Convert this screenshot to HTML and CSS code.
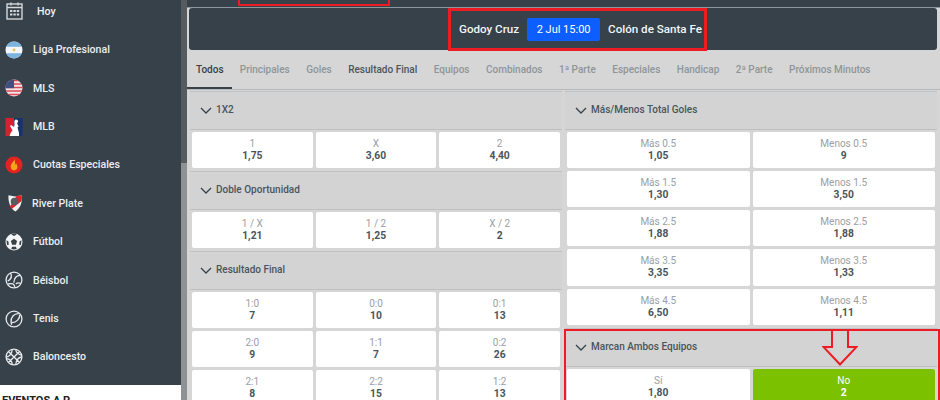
FILE: index.html
```html
<!DOCTYPE html>
<html lang="es">
<head>
<meta charset="utf-8">
<title>Godoy Cruz - Colón de Santa Fe</title>
<link rel="stylesheet" href="styles.css">
</head>
<body>
<div class="page">
  <aside class="side">
    <nav class="nav">
      <div class="nav-item nav-hoy"><svg class="ico" viewBox="0 0 18 18"><rect x="1" y="2" width="15" height="15" fill="none" stroke="#d5d8da" stroke-width="1.4"/><path d="M1 5.5h15M5 0.5v3M12 0.5v3" stroke="#d5d8da" stroke-width="1.4"/><path d="M4 8h2.4v2H4zM7.4 8h2.4v2H7.4zM10.8 8h2.4v2h-2.4zM4 11.5h2.4v2H4zM7.4 11.5h2.4v2H7.4zM10.8 11.5h2.4v2h-2.4z" fill="#d5d8da"/></svg><span>Hoy</span></div>
      <div class="nav-item"><svg class="ico" viewBox="0 0 18 18"><defs><clipPath id="c1"><circle cx="9" cy="9" r="8.5"/></clipPath></defs><g clip-path="url(#c1)"><rect width="18" height="18" fill="#f4f6f7"/><rect width="18" height="5.8" fill="#7db4de"/><rect y="12.2" width="18" height="5.8" fill="#7db4de"/></g><circle cx="9" cy="9" r="1.4" fill="#e8c45a"/></svg><span>Liga Profesional</span></div>
      <div class="nav-item"><svg class="ico" viewBox="0 0 18 18"><defs><clipPath id="c2"><circle cx="9" cy="9" r="8.5"/></clipPath></defs><g clip-path="url(#c2)"><rect width="18" height="18" fill="#f3e4e6"/><path d="M0 1.5h18M0 5h18M0 8.5h18M0 12h18M0 15.5h18" stroke="#d9495a" stroke-width="1.7"/><rect width="9" height="9.2" fill="#3d4f86"/></g></svg><span>MLS</span></div>
      <div class="nav-item"><svg class="ico" viewBox="0 0 18 18"><rect x="0.5" y="0" width="8.5" height="18" fill="#d4232f"/><rect x="9" y="0" width="8.5" height="18" fill="#17336e"/><path d="M11 1.5c1.6 0 2.4 1.2 2 2.7l-1 .8 1.6 3.5-1.1 1 1.500 5.500v3.500H4.500c.6-2.600 1.600-4.700 3-6.300L5 8l1-1 3 2 .6-3C9 4 9.400 1.500 11 1.500z" fill="#fff"/></svg><span>MLB</span></div>
      <div class="nav-item"><svg class="ico" viewBox="0 0 18 18"><circle cx="9" cy="9" r="8.500" fill="#e3231f"/><path d="M9.300 3c.4 2-3.600 4.200-3.600 7.600C5.700 13 7 14.400 9 14.400s3.400-1.400 3.400-3.600c0-1.600-.8-2.800-1.400-3.600-.2.900-.5 1.300-1 1.600.3-2.100-.1-4.300-.7-5.800z" fill="#f7a11f"/></svg><span>Cuotas Especiales</span></div>
      <div class="nav-item nav-river"><svg class="ico" viewBox="0 0 18 18"><path d="M2.500 1.200 9 2.400l6.800-1.200c.6 6.300-.9 12.700-6.300 16.300C4.100 14.300 2 7.400 2.500 1.200z" fill="#f2f2f2"/><path d="M10.500 1.900 15.800 1.200c.2 2 .1 4-.2 5.900L5.400 15.200 4 12.500z" fill="#d9252b"/><circle cx="8.500" cy="7.500" r="3.800" fill="#555c62"/></svg><span>River Plate</span></div>
      <div class="nav-item"><svg class="ico" viewBox="0 0 18 18"><circle cx="9" cy="9" r="8.500" fill="#f2f4f5"/><path d="M9 5.700l3.100 2.300-1.200 3.700H7.100L5.900 8z" fill="#36414a"/><path d="M6.500 1.400 9 2.900l2.500-1.500-.3-.6H6.800zM1.500 7.200l1.900 1.400.4 3.100-1.700.3zM16.500 7.200l-1.900 1.400-.4 3.100 1.700.3zM6.200 16l.9-2.200h3.800l.9 2.200-2.800.6z" fill="#36414a"/></svg><span>Fútbol</span></div>
      <div class="nav-item"><svg class="ico" viewBox="0 0 18 18"><g fill="none" stroke="#e9ecee" stroke-width="1.300"><circle cx="9" cy="9" r="7.900"/><path d="M5.500 2c1.800 2.900 1.600 5.200-2.800 8.300M3 13c4-1 6.500-.4 6.800 3.300M15.200 4.300c-3.500 0-6 2.500-6.400 7.500M15.800 12.500c-1.700-.9-3.400-.8-5 .5"/></g></svg><span>Béisbol</span></div>
      <div class="nav-item"><svg class="ico" viewBox="0 0 18 18"><g fill="none" stroke="#e9ecee" stroke-width="1.300"><circle cx="9" cy="9" r="7.900"/><path d="M13.800 3.700c-4.800-.4-8.300 3.600-7.700 8.700.1.900.4 1.700.8 2.300M14.700 4.700c.2 4.100-3 7.800-7.800 8"/></g></svg><span>Tenis</span></div>
      <div class="nav-item"><svg class="ico" viewBox="0 0 18 18"><g fill="none" stroke="#e9ecee" stroke-width="1.300"><circle cx="9" cy="9" r="7.900"/><path d="M3.400 3.500 14.600 14.500M14.600 3.500 3.400 14.500M1.300 9c3.500-.5 5.500-3 6-7.700M16.700 9c-3.500.5-5.500 3-6 7.700M10.700 1.300c.3 2.800 2 5 6 6M1.300 10.700c4 .3 5.700 2.200 6 6"/></g></svg><span>Baloncesto</span></div>
    </nav>
    <div class="side-foot">EVENTOS A P</div>
  </aside>
  <div class="scroll"><div class="scroll-thumb"></div></div>
  <main class="main">
    <div class="topstrip"></div>
    <header class="match">
      <span class="team">Godoy Cruz</span>
      <span class="date">2 Jul 15:00</span>
      <span class="team">Colón de Santa Fe</span>
    </header>
    <div class="tabs">
      <span class="tab active">Todos</span>
      <span class="tab">Principales</span>
      <span class="tab">Goles</span>
      <span class="tab strong">Resultado Final</span>
      <span class="tab">Equipos</span>
      <span class="tab">Combinados</span>
      <span class="tab">1ª Parte</span>
      <span class="tab">Especiales</span>
      <span class="tab">Handicap</span>
      <span class="tab">2ª Parte</span>
      <span class="tab">Próximos Minutos</span>
    </div>
    <div class="cols">
      <section class="col">
        <div class="mkt-head"><svg class="chev" viewBox="0 0 12 7"><path d="M1 1l5 5 5-5" fill="none" stroke="#36414a" stroke-width="1.300"/></svg>1X2</div>
        <div class="odds three">
          <div class="odd"><small>1</small><b>1,75</b></div>
          <div class="odd"><small>X</small><b>3,60</b></div>
          <div class="odd"><small>2</small><b>4,40</b></div>
        </div>
        <div class="mkt-head"><svg class="chev" viewBox="0 0 12 7"><path d="M1 1l5 5 5-5" fill="none" stroke="#36414a" stroke-width="1.300"/></svg>Doble Oportunidad</div>
        <div class="odds three">
          <div class="odd"><small>1 / X</small><b>1,21</b></div>
          <div class="odd"><small>1 / 2</small><b>1,25</b></div>
          <div class="odd"><small>X / 2</small><b>2</b></div>
        </div>
        <div class="mkt-head"><svg class="chev" viewBox="0 0 12 7"><path d="M1 1l5 5 5-5" fill="none" stroke="#36414a" stroke-width="1.300"/></svg>Resultado Final</div>
        <div class="odds three">
          <div class="odd"><small>1:0</small><b>7</b></div>
          <div class="odd"><small>0:0</small><b>10</b></div>
          <div class="odd"><small>0:1</small><b>13</b></div>
          <div class="odd"><small>2:0</small><b>9</b></div>
          <div class="odd"><small>1:1</small><b>7</b></div>
          <div class="odd"><small>0:2</small><b>26</b></div>
          <div class="odd"><small>2:1</small><b>8</b></div>
          <div class="odd"><small>2:2</small><b>15</b></div>
          <div class="odd"><small>1:2</small><b>13</b></div>
        </div>
      </section>
      <section class="col">
        <div class="mkt-head"><svg class="chev" viewBox="0 0 12 7"><path d="M1 1l5 5 5-5" fill="none" stroke="#36414a" stroke-width="1.300"/></svg>Más/Menos Total Goles</div>
        <div class="odds two">
          <div class="odd"><small>Más 0.5</small><b>1,05</b></div>
          <div class="odd"><small>Menos 0.5</small><b>9</b></div>
          <div class="odd"><small>Más 1.5</small><b>1,30</b></div>
          <div class="odd"><small>Menos 1.5</small><b>3,50</b></div>
          <div class="odd"><small>Más 2.5</small><b>1,88</b></div>
          <div class="odd"><small>Menos 2.5</small><b>1,88</b></div>
          <div class="odd"><small>Más 3.5</small><b>3,35</b></div>
          <div class="odd"><small>Menos 3.5</small><b>1,33</b></div>
          <div class="odd"><small>Más 4.5</small><b>6,50</b></div>
          <div class="odd"><small>Menos 4.5</small><b>1,11</b></div>
        </div>
        <div class="mkt-head"><svg class="chev" viewBox="0 0 12 7"><path d="M1 1l5 5 5-5" fill="none" stroke="#36414a" stroke-width="1.300"/></svg>Marcan Ambos Equipos</div>
        <div class="odds two">
          <div class="odd"><small>Sí</small><b>1,80</b></div>
          <div class="odd picked"><small>No</small><b>2</b></div>
        </div>
      </section>
    </div>
  </main>
</div>
<div class="mark mark-top"></div>
<div class="mark mark-match"></div>
<div class="mark mark-market"></div>
<svg class="arrow" viewBox="0 0 36 36"><path d="M10 0v17H1.500L18 34.500 34.500 17H26V0" fill="none" stroke="#ed1c24" stroke-width="2"/></svg>
</body>
</html>
```
FILE: styles.css
```css
* { box-sizing: border-box; }
html, body { margin: 0; height: 400px; overflow: hidden; }
body { position: relative; font-family: Roboto, "Liberation Sans", sans-serif; background: #d6d6d6; color: #36414a; }
.page { display: flex; height: 400px; }

.side { width: 181px; flex: none; display: flex; flex-direction: column; background: #fff; }
.nav { height: 385px; flex: none; background: #36414a; overflow: hidden; }
.nav-item { height: 38.4px; display: flex; align-items: center; padding-left: 5px; gap: 10px; color: #eceeef; font-size: 10.6px; font-weight: 500; }
.nav-item:first-child { margin-top: -7.8px; }
.nav-hoy { padding-left: 6px; gap: 13px; }
.nav-river { padding-left: 6px; gap: 8px; }
.ico { width: 18px; height: 18px; flex: none; }
.side-foot { padding: 9px 0 0 2px; font-size: 11px; font-weight: 700; color: #222; line-height: 13px; white-space: nowrap; }

.scroll { width: 6px; flex: none; background: #8e9295; }
.scroll-thumb { height: 163px; background: #565b60; }

.main { flex: 1; min-width: 0; display: flex; flex-direction: column; }
.topstrip { height: 8px; flex: none; background: #36414a; border-bottom: 1px solid #8f979d; }
.match { height: 42px; flex: none; margin: 0 3px 0 2px; padding-left: 35px; border-radius: 3px; background: #36414a; display: flex; align-items: center; justify-content: center; gap: 8px; }
.team { color: #f4f5f6; font-size: 11.6px; font-weight: 500; }
.date { width: 73px; height: 23px; border-radius: 2px; background: #0d5eff; color: #fff; font-size: 11px; display: flex; align-items: center; justify-content: center; white-space: nowrap; }

.tabs { height: 40px; flex: none; display: flex; border-bottom: 1px solid #b5b9bb; }
.tab { padding: 0 8.25px; display: flex; align-items: center; font-size: 10px; font-weight: 500; color: #8f9599; white-space: nowrap; }
.tab.strong { color: #4c555c; }
.tab.active { color: #36414a; border-bottom: 2px solid #36414a; padding-left: 9px; padding-right: 8px; padding-top: 2px; }

.cols { display: flex; gap: 3px; padding: 1px 3px 0; }
.col { flex: 1; min-width: 0; }
.mkt-head { height: 38.8px; display: flex; align-items: center; gap: 4px; padding: 0 0 2px 10px; background: #d3d3d3; border-top: 1px solid #bfc1c2; border-bottom: 1px solid #bdbfc0; font-size: 10px; font-weight: 500; color: #4a545c; }
.chev { width: 12px; height: 7px; flex: none; margin-top: 2px; }
.odds { display: grid; gap: 3px; padding: 2px 2px; }
.odds + .mkt-head { margin-top: 1px; }
.three { grid-template-columns: repeat(3, 1fr); }
.two { grid-template-columns: repeat(2, 1fr); }
.odd { height: 36.2px; background: #fff; border-radius: 2px; display: flex; flex-direction: column; align-items: center; justify-content: center; }
.odd small { font-size: 10px; line-height: 12px; color: #9aa0a4; }
.odd b { font-size: 10.3px; line-height: 12px; font-weight: 700; color: #4a545c; }
.odd.picked { background: #7bc100; }
.odd.picked small, .odd.picked b { color: #fff; }

.mark { position: absolute; border: 2px solid #ed1c24; }
.mark-top { left: 238px; top: -2px; width: 152px; height: 8px; }
.mark-match { left: 448px; top: 8px; width: 259px; height: 43px; border-width: 3px; }
.mark-market { left: 564px; top: 329px; width: 376px; height: 80px; }
.arrow { position: absolute; left: 822px; top: 330px; width: 36px; height: 36px; }
```
